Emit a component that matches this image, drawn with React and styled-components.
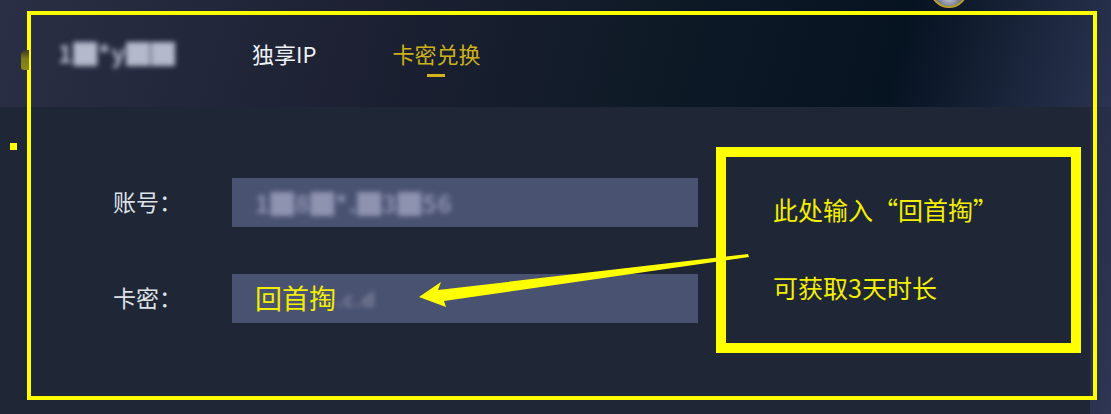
import styled, { createGlobalStyle } from "styled-components";

const GlobalStyle = createGlobalStyle`
  html, body {
    margin: 0;
    padding: 0;
    background: #1f2636;
    overflow: hidden;
  }
  * { box-sizing: border-box; }
`;

const Screen = styled.div`
  position: relative;
  width: 1111px;
  height: 414px;
  overflow: hidden;
  font-family: "Noto Sans CJK SC", "Noto Sans", sans-serif;
  background: linear-gradient(100deg, #1f2636 86%, #262d45 94%, #2f3654 100%);
`;

const Header = styled.div`
  height: 107px;
  display: flex;
  align-items: flex-start;
  gap: 76px;
  padding: 41px 0 0 58px;
  background: linear-gradient(105deg, #2b2f45 0%, #1d2133 32%, #0f1a27 58%, #061321 80%, #2b3350 100%);
`;

const NavItem = styled.div`
  display: flex;
  flex-direction: column;
  align-items: center;
  font-size: 22px;
  line-height: 24px;
  color: ${(p) => (p.$active ? "#cdb118" : "#eef1f5")};
`;

const NavBar = styled.div`
  width: 18px;
  height: 3px;
  margin-top: 9px;
  background: #d4b21c;
`;

const Blurred = styled.span`
  display: inline-block;
  white-space: nowrap;
  font-size: ${(p) => p.$size || 22}px;
  font-weight: 700;
  color: ${(p) => p.$color || "#9ca3b8"};
  filter: blur(${(p) => p.$blur || 2.5}px);
  letter-spacing: 1px;
`;

const Panel = styled.div`
  width: 1090px;
  height: 307px;
  background: #1f2636;
  display: flex;
  align-items: flex-start;
`;

const Form = styled.div`
  display: flex;
  flex-direction: column;
  gap: 47px;
  padding: 71px 0 0 113px;
`;

const Row = styled.div`
  display: flex;
  align-items: center;
`;

const Label = styled.div`
  width: 119px;
  font-size: 23px;
  color: #dde1e8;
  margin-top: -3px;
`;

const Field = styled.div`
  width: 466px;
  height: 49px;
  background: #4a5272;
  display: flex;
  align-items: center;
  padding-left: 23px;
`;

const Typed = styled.span`
  font-size: 27px;
  color: #f2ee00;
  margin-top: -2px;
`;

const Callout = styled.div`
  margin: 40px 0 0 18px;
  width: 365px;
  height: 206px;
  border: 10px solid #ffff00;
  display: flex;
  flex-direction: column;
  gap: 48px;
  padding: 37px 0 0 47px;
  font-size: 25px;
  line-height: 30px;
  color: #f3ef00;
`;

const Frame = styled.div`
  position: absolute;
  left: 27px;
  top: 11px;
  width: 1070px;
  height: 389px;
  border: 4px solid #ffff00;
  pointer-events: none;
`;

const Marker = styled.div`
  position: absolute;
  left: 10px;
  top: 143px;
  width: 7px;
  height: 7px;
  background: #ffff00;
`;

const Tab = styled.div`
  position: absolute;
  left: 21px;
  top: 50px;
  width: 8px;
  height: 20px;
  border-radius: 5px 0 0 3px;
  background: linear-gradient(180deg, #3a3a24 0%, #7d7a1c 45%, #8c8a1a 100%);
`;

const Knob = styled.div`
  position: absolute;
  left: 930px;
  top: -30px;
  width: 38px;
  height: 38px;
  border-radius: 50%;
  border: 2px solid #b89d2a;
  background: radial-gradient(circle at 50% 70%, #d8dbe4 0%, #7f8599 35%, #2b3040 75%);
`;

const Overlay = styled.svg`
  position: absolute;
  left: 0;
  top: 0;
  pointer-events: none;
`;

export default function App() {
  return (
    <Screen>
      <GlobalStyle />
      <Header>
        <NavItem>
          <Blurred $size={24} $color="#b4b9cb">1&#x2588;*y&#x2588;&#x2588;</Blurred>
        </NavItem>
        <NavItem>独享IP</NavItem>
        <NavItem $active>
          卡密兑换
          <NavBar />
        </NavItem>
      </Header>
      <Panel>
        <Form>
          <Row>
            <Label>账号：</Label>
            <Field>
              <Blurred $size={24} $color="#8e94b0">1&#x2588;8&#x2588;*.&#x2588;3&#x2588;56</Blurred>
            </Field>
          </Row>
          <Row>
            <Label>卡密：</Label>
            <Field>
              <Typed>回首掏</Typed>
              <Blurred $size={20} $color="#7d8398">.c.d</Blurred>
            </Field>
          </Row>
        </Form>
        <Callout>
          <div>此处输入“回首掏”</div>
          <div>可获取3天时长</div>
        </Callout>
      </Panel>
      <Frame />
      <Marker />
      <Tab />
      <Knob />
      <Overlay width="1111" height="414" viewBox="0 0 1111 414">
        <polygon
          points="419,297 441,282 438,290 748,254 749,257 444,301 446,307"
          fill="#ffff00"
        />
      </Overlay>
    </Screen>
  );
}
